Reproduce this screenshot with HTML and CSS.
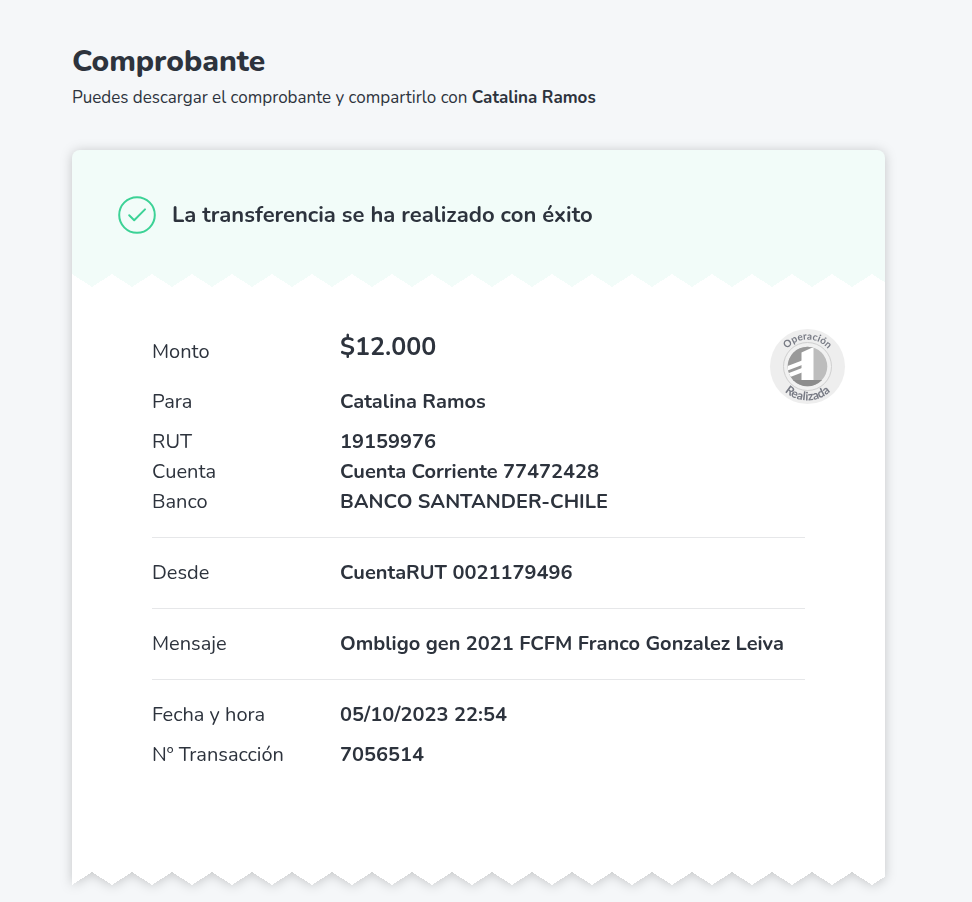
FILE: index.html
```html
<!DOCTYPE html>
<html lang="es">
<head>
<meta charset="utf-8">
<meta name="viewport" content="width=device-width, initial-scale=1">
<title>Comprobante</title>
<link rel="stylesheet" href="styles.css">
</head>
<body>
<main class="page">
  <header class="intro">
    <h1 class="title">Comprobante</h1>
    <p class="subtitle">Puedes descargar el comprobante y compartirlo con <strong>Catalina Ramos</strong></p>
  </header>

  <article class="receipt">
    <div class="banner">
      <svg class="check" viewBox="0 0 38 38" aria-hidden="true">
        <circle cx="19" cy="19" r="17.8"/>
        <path d="M11.2 19.2 L16.2 24.2 L27 13.4"/>
      </svg>
      <h2 class="banner-title">La transferencia se ha realizado con éxito</h2>
    </div>

    <div class="details">
      <svg class="seal" viewBox="0 0 75 75" role="img" aria-label="Operación Realizada">
        <defs>
          <path id="arc-top" d="M10.500 37.500 A27 27 0 0 1 64.500 37.500"/>
          <path id="arc-bottom" d="M3.500 37.500 A34 34 0 0 0 71.500 37.500"/>
          <clipPath id="disc"><circle cx="37.500" cy="37.500" r="19.800"/></clipPath>
        </defs>
        <circle cx="37.500" cy="37.500" r="37.500" fill="#eeeeee"/>
        <circle cx="37.500" cy="37.500" r="24" fill="#f1f1f1" stroke="#cfcfcf"/>
        <g clip-path="url(#disc)">
          <path d="M17 17 H58 V58 H17 Z" fill="#bdbdbd"/>
          <path d="M17 17 H43 V52 H17 Z" fill="#999999"/>
          <path d="M17 51 H58 V58 H17 Z" fill="#8c8c8c"/>
          <path d="M31.500 23.500 L43.500 18 V51 H31.500 Z" fill="#ffffff"/>
          <path d="M16 37.500 L32 31.500 V36 L16 42 Z" fill="#ffffff"/>
          <path d="M16 45 L32 39 V43.500 L16 49.500 Z" fill="#ffffff"/>
        </g>
        <text class="seal-text"><textPath href="#arc-top" startOffset="50%">Operación</textPath></text>
        <text class="seal-text seal-text-lower"><textPath href="#arc-bottom" startOffset="50%">Realizada</textPath></text>
      </svg>

      <dl class="group">
        <div class="row row-amount"><dt>Monto</dt><dd class="amount">$12.000</dd></div>
        <div class="row"><dt>Para</dt><dd>Catalina Ramos</dd></div>
        <div class="account">
          <div class="row"><dt>RUT</dt><dd>19159976</dd></div>
          <div class="row"><dt>Cuenta</dt><dd>Cuenta Corriente 77472428</dd></div>
          <div class="row"><dt>Banco</dt><dd>BANCO SANTANDER-CHILE</dd></div>
        </div>
      </dl>
      <dl class="group">
        <div class="row"><dt>Desde</dt><dd>CuentaRUT 0021179496</dd></div>
      </dl>
      <dl class="group">
        <div class="row"><dt>Mensaje</dt><dd>Ombligo gen 2021 FCFM Franco Gonzalez Leiva</dd></div>
      </dl>
      <dl class="group">
        <div class="row"><dt>Fecha y hora</dt><dd>05/10/2023 22:54</dd></div>
        <div class="row"><dt>Nº Transacción</dt><dd>7056514</dd></div>
      </dl>
    </div>
  </article>
</main>
</body>
</html>
```
FILE: styles.css
```css
* {
  box-sizing: border-box;
}

body {
  margin: 0;
  background: #f5f7f9;
  color: #2d333d;
  font-family: Nunito, Lato, sans-serif;
}

h1, h2, p, dl, dd {
  margin: 0;
}

.page {
  padding: 42px 87px 16px 72px;
}

.intro {
  margin-bottom: 39px;
}

.title {
  font-size: 30px;
  line-height: 40px;
  font-weight: 800;
}

.subtitle {
  margin-top: 3px;
  font-size: 17px;
  line-height: 26px;
}

.receipt {
  filter: drop-shadow(0 1px 6px rgba(0, 0, 0, 0.2));
}

/* Both blocks end in a row of 40px wide teeth */
.banner::after,
.details::after {
  content: "";
  display: block;
  height: 13px;
  background: conic-gradient(from -57deg at 50% 100%, var(--tooth) 114deg, transparent 0) 0 0 / 40px 13px repeat-x;
}

.banner {
  --tooth: #f2fcf9;
  display: flex;
  flex-wrap: wrap;
  align-items: center;
  column-gap: 16px;
  padding: 46px 46px 0;
  background: #f2fcf9;
  border-radius: 8px 8px 0 0;
}

.banner::after {
  flex: 0 0 calc(100% + 92px);
  margin: 40px -46px 0;
  background-color: #ffffff;
}

.check {
  width: 38px;
  height: 38px;
  fill: none;
  stroke: #3cd296;
  stroke-width: 2;
  stroke-linecap: round;
  stroke-linejoin: round;
}

.banner-title {
  font-size: 22px;
  line-height: 32px;
  font-weight: 700;
}

.details {
  --tooth: #ffffff;
  position: relative;
  background: linear-gradient(#ffffff, #ffffff) 0 0 / 100% calc(100% - 13px) no-repeat;
}

.details::after {
  background-position: -20px 0;
}

.group {
  display: grid;
  row-gap: 10px;
  margin: 0 80px;
  padding: 20px 0;
}

.group:first-of-type {
  padding-top: 50px;
}

.group:last-of-type {
  padding-bottom: 102px;
}

.group + .group {
  border-top: 1px solid #e6e7e9;
}

.row {
  display: grid;
  grid-template-columns: 188px 1fr;
  font-size: 20px;
  line-height: 30px;
}

.row-amount {
  margin-bottom: 10px;
}

.row dd {
  font-weight: 700;
}

.row .amount {
  margin: -5px 0 5px;
  font-size: 25px;
}

.seal {
  position: absolute;
  top: 42px;
  right: 40px;
  width: 75px;
  height: 75px;
  overflow: visible;
}

.seal-text {
  fill: #777a84;
  font-family: Lato, sans-serif;
  font-size: 10px;
  font-weight: 700;
  text-anchor: middle;
}

.seal-text-lower {
  font-size: 12px;
}
```
